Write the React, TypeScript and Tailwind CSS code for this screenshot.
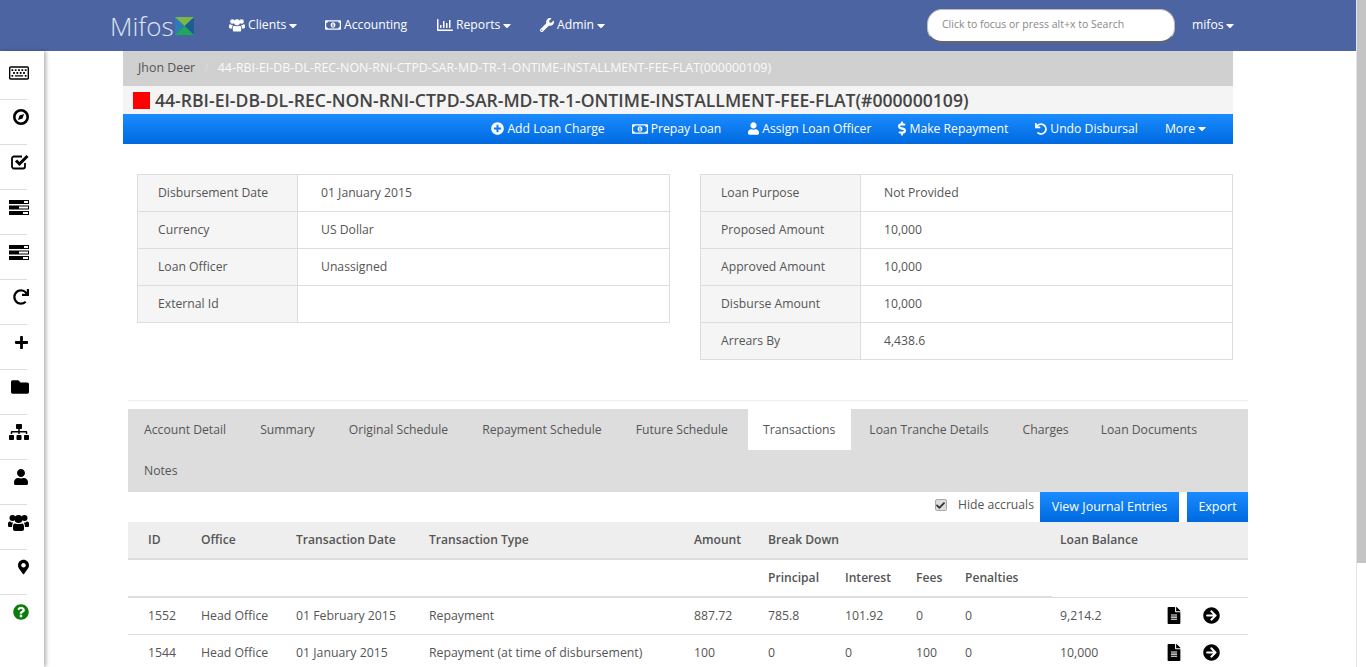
import {
  FaRegMoneyBillAlt, FaRegChartBar, FaWrench, FaCaretDown, FaPlusCircle, FaUser, FaDollarSign, FaUndo, FaCheck,
  FaRegKeyboard, FaRedo, FaPlus, FaFolder, FaSitemap, FaMapMarkerAlt, FaQuestionCircle,
  FaFileAlt, FaArrowCircleRight,
} from "react-icons/fa";

// fa-tasks from FA4, the package only has the newer shape
function TasksIcon() {
  return (
    <svg width="20" height="15" viewBox="0 0 20 15" fill="currentColor">
      <path d="M0 0h20v4H0zM15 1v2h4V1zM0 5.500h20v4H0zM10 6.500v2h9v-2zM0 11h20v4H0zM14 12v2h5v-2z" fillRule="evenodd" />
    </svg>
  );
}

function CompassIcon() {
  return (
    <svg width="16" height="16" viewBox="0 0 16 16">
      <circle cx="8" cy="8" r="6.700" fill="none" stroke="currentColor" strokeWidth="2.600" />
      <path d="M11 5L9.500 9.500L5 11L6.500 6.500z" fill="currentColor" />
    </svg>
  );
}

function CheckSquareIcon() {
  return (
    <svg width="18" height="16" viewBox="0 0 18 16" fill="none" stroke="currentColor">
      <path d="M14 9v3.500a2 2 0 0 1-2 2H3a2 2 0 0 1-2-2v-8a2 2 0 0 1 2-2h8" strokeWidth="1.800" />
      <path d="M5 6.500L8.500 10L16.500 2" strokeWidth="3" />
    </svg>
  );
}

function UsersIcon({ className }: { className?: string }) {
  return (
    <svg viewBox="0 0 21 17" fill="currentColor" className={className}>
      <circle cx="4.500" cy="4" r="3" />
      <circle cx="16.500" cy="4" r="3" />
      <circle cx="10.500" cy="5" r="4" />
      <path d="M0 9.500C0 8 1 7.500 2 7.500C3 8.500 4 8.500 5 8.500C4.500 10 4 11.500 4 13H1.500C.5 13 0 12.500 0 11.500z" />
      <path d="M21 9.500C21 8 20 7.500 19 7.500C18 8.500 17 8.500 16 8.500C16.500 10 17 11.500 17 13H19.500C20.500 13 21 12.500 21 11.500z" />
      <path d="M7 9.500C8 10.300 13 10.300 14 9.500C15.500 9.500 16 11 16 13V15C16 16.300 15.300 17 14 17H7C5.700 17 5 16.300 5 15V13C5 11 5.500 9.500 7 9.500z" />
    </svg>
  );
}

function Caret() {
  return <FaCaretDown className="w-[8px] h-[13px] shrink-0" />;
}

function Logo() {
  return (
    <div className="flex items-center">
      <span className="text-[26px] font-light text-[#dfe4ef] leading-none">Mifos</span>
      <svg width="19" height="18" viewBox="0 0 20 19" className="ml-[1px]">
        <path d="M0 0L10 9.500L0 19z" fill="#2a7db8" />
        <path d="M20 0L10 9.500L20 19z" fill="#1a5f8f" />
        <path d="M0 0H20L10 9.500z" fill="#7ab648" />
        <path d="M0 19H20L10 9.500z" fill="#1fa85a" />
      </svg>
    </div>
  );
}

const navItems = [
  { label: "Clients", icon: <UsersIcon className="w-[16px] h-[14px]" />, caret: true, w: "w-[96px]" },
  { label: "Accounting", icon: <FaRegMoneyBillAlt size={16} />, caret: false, w: "w-[112px]" },
  { label: "Reports", icon: <FaRegChartBar size={16} />, caret: true, w: "w-[103px]" },
  { label: "Admin", icon: <FaWrench size={14} />, caret: true, w: "w-[80px]" },
];

const sideIcons = [
  <FaRegKeyboard size={20} />,
  <CompassIcon />,
  <CheckSquareIcon />,
  <TasksIcon />,
  <TasksIcon />,
  <FaRedo size={16} />,
  <FaPlus size={15} />,
  <FaFolder size={18} />,
  <FaSitemap size={20} />,
  <FaUser size={16} />,
  <UsersIcon className="w-[21px] h-[17px]" />,
  <FaMapMarkerAlt className="w-[11px] h-[16px]" />,
  <FaQuestionCircle size={16} className="text-[#0a7d0a]" />,
];

const actions = [
  { label: "Add Loan Charge", icon: <FaPlusCircle size={13} /> },
  { label: "Prepay Loan", icon: <FaRegMoneyBillAlt size={16} /> },
  { label: "Assign Loan Officer", icon: <FaUser className="w-[11px] h-[13px]" /> },
  { label: "Make Repayment", icon: <FaDollarSign className="w-[8px] h-[15px]" /> },
  { label: "Undo Disbursal", icon: <FaUndo size={12} /> },
];

const leftRows = [
  ["Disbursement Date", "01 January 2015"],
  ["Currency", "US Dollar"],
  ["Loan Officer", "Unassigned"],
  ["External Id", ""],
];

const rightRows = [
  ["Loan Purpose", "Not Provided"],
  ["Proposed Amount", "10,000"],
  ["Approved Amount", "10,000"],
  ["Disburse Amount", "10,000"],
  ["Arrears By", "4,438.6"],
];

const tabs = [
  "Account Detail", "Summary", "Original Schedule", "Repayment Schedule", "Future Schedule",
  "Transactions", "Loan Tranche Details", "Charges", "Loan Documents", "Notes",
];

const transactions = [
  ["1552", "Head Office", "01 February 2015", "Repayment", "887.72", "785.8", "101.92", "0", "0", "9,214.2"],
  ["1544", "Head Office", "01 January 2015", "Repayment (at time of disbursement)", "100", "0", "0", "100", "0", "10,000"],
];

function InfoTable({ rows }: { rows: string[][] }) {
  return (
    <div className="w-[533px] border border-[#ddd] border-b-0 self-start">
      {rows.map(([k, v]) => (
        <div key={k} className="flex h-[37px] border-b border-[#ddd] items-center">
          <div className="w-[160px] h-full flex items-center pl-5 bg-[#f5f5f5] border-r border-[#ddd]">{k}</div>
          <div className="pl-[23px]">{v}</div>
        </div>
      ))}
    </div>
  );
}

export default function App() {
  return (
    <div className="h-[667px] w-[1366px] overflow-hidden flex font-['Open_Sans',sans-serif] text-[12.2px] text-[#555]">
      <div className="w-[1356px] flex flex-col">
        {/* navbar */}
        <header className="h-[51px] shrink-0 bg-[#4c65a2] flex items-center text-white pl-[110px]">
          <div className="w-[119px]"><Logo /></div>
          {navItems.map((n) => (
            <div key={n.label} className={`flex items-center gap-[3px] ${n.w}`}>
              {n.icon}
              <span>{n.label}</span>
              {n.caret && <Caret />}
            </div>
          ))}
          <div className="ml-[307px] w-[248px] h-[34px] rounded-[15px] bg-white border border-[#bbb] border-b-2 border-b-[#666] flex items-center pl-[14px] text-[10.5px] text-[#888]">
            Click to focus or press alt+x to Search
          </div>
          <div className="ml-[17px] flex items-center gap-[2px]">
            <span>mifos</span>
            <Caret />
          </div>
        </header>

        <div className="flex flex-1 min-h-0">
          {/* sidebar */}
          <aside className="w-[44px] shrink-0 bg-white shadow-[2px_0_4px_rgba(0,0,0,0.3)] pt-[4px] text-black z-10">
            {sideIcons.map((icon, i) => (
              <div key={i} className="h-[45px] border-b border-[#ddd] last:border-b-0 first:pt-[1px] w-[27px]">
                <div className="h-[34px] w-[29px] flex items-center justify-end">{icon}</div>
              </div>
            ))}
          </aside>

          <main className="flex-1 min-w-0 pl-[79px] pr-[123px]">
            {/* breadcrumb */}
            <div className="h-[35px] bg-[#d0d0d0] flex items-center pl-[15px] text-[12.4px]">
              <span className="text-[#555]">Jhon Deer</span>
              <span className="mx-[9px] text-[#ddd]">/</span>
              <span className="text-[#fafafa]">44-RBI-EI-DB-DL-REC-NON-RNI-CTPD-SAR-MD-TR-1-ONTIME-INSTALLMENT-FEE-FLAT(000000109)</span>
            </div>
            <div className="h-[28px] bg-[#f4f4f4] flex items-center pl-[10px] gap-[5px]">
              <span className="w-[17px] h-[17px] bg-[#ff0000]" />
              <span className="text-[17.6px] font-semibold text-[#444]">44-RBI-EI-DB-DL-REC-NON-RNI-CTPD-SAR-MD-TR-1-ONTIME-INSTALLMENT-FEE-FLAT(#000000109)</span>
            </div>
            <div className="h-[30px] bg-gradient-to-b from-[#1a8cff] to-[#0069e0] flex items-center justify-end text-white pr-[27px] gap-[27px]">
              {actions.map((a) => (
                <div key={a.label} className="flex items-center gap-[3px]">
                  {a.icon}
                  <span>{a.label}</span>
                </div>
              ))}
              <div className="flex items-center gap-[3px]">
                <span>More</span>
                <Caret />
              </div>
            </div>

            <div className="flex justify-between pt-[30px] pl-[14px] h-[256px]">
              <InfoTable rows={leftRows} />
              <InfoTable rows={rightRows} />
            </div>

            {/* tabs + transactions */}
            <div className="ml-[5px] w-[1120px]">
              <div className="h-[1px] bg-[#eee] mb-[8px]" />
              <div className="bg-[#ddd] flex flex-wrap h-[83px] content-start">
                {tabs.map((t) => (
                  <div
                    key={t}
                    className={`h-[41px] flex items-center pt-[1px] ${
                      t === "Transactions" ? "bg-white ml-[2px] pl-[15px] pr-[16px] mr-[2px]" : t === "Charges" ? "px-[16px]" : "px-[16px] mr-[2px]"
                    }`}
                  >
                    {t}
                  </div>
                ))}
              </div>
              <div className="h-[30px] flex justify-end items-start">
                <div className="flex items-center gap-[11px] mr-[6px] h-[26px]">
                  <span className="w-[12px] h-[12px] rounded-[2px] bg-[#ddd] border border-[#aaa] flex items-center justify-center">
                    <FaCheck size={9} className="text-[#333]" />
                  </span>
                  <span>Hide accruals</span>
                </div>
                <div className="h-[30px] w-[139px] flex items-center justify-center text-[12.5px] bg-gradient-to-b from-[#1a8cff] to-[#0069e0] text-white">View Journal Entries</div>
                <div className="h-[30px] w-[61px] ml-[8px] flex items-center justify-center text-[12.5px] bg-gradient-to-b from-[#1a8cff] to-[#0069e0] text-white">Export</div>
              </div>
              <table className="w-full table-fixed border-collapse text-left text-[12.1px]">
                <colgroup>
                  <col className="w-[65px]" /><col className="w-[95px]" /><col className="w-[133px]" /><col className="w-[265px]" />
                  <col className="w-[74px]" /><col className="w-[77px]" /><col className="w-[71px]" /><col className="w-[49px]" />
                  <col className="w-[95px]" /><col className="w-[107px]" /><col className="w-[36px]" /><col className="w-[53px]" />
                </colgroup>
                <thead>
                  <tr className="h-[37px] bg-[#eee] border-b-2 border-[#ddd]">
                    <th className="pl-5 font-semibold">ID</th>
                    <th className="pl-2 font-semibold">Office</th>
                    <th className="pl-2 font-semibold">Transaction Date</th>
                    <th className="pl-2 font-semibold">Transaction Type</th>
                    <th className="pl-2 font-semibold">Amount</th>
                    <th className="pl-2 font-semibold" colSpan={4}>Break Down</th>
                    <th className="pl-2 font-semibold" colSpan={3}>Loan Balance</th>
                  </tr>
                  <tr className="h-[38px]">
                    <th colSpan={5} className="border-b-2 border-[#ddd]" />
                    <th className="pl-2 font-semibold border-b-2 border-[#ddd]">Principal</th>
                    <th className="pl-2 font-semibold border-b-2 border-[#ddd]">Interest</th>
                    <th className="pl-2 font-semibold border-b-2 border-[#ddd]">Fees</th>
                    <th className="pl-2 font-semibold border-b-2 border-[#ddd]">Penalties</th>
                    <th colSpan={3} className="border-b border-[#ddd]" />
                  </tr>
                </thead>
                <tbody className="text-[12.3px]">
                  {transactions.map((row) => (
                    <tr key={row[0]} className="h-[37px] border-b border-[#ddd]">
                      {row.map((c, i) => (
                        <td key={i} className={i === 0 ? "pl-5 pt-[1px]" : "pl-2 pt-[1px]"}>{c}</td>
                      ))}
                      <td className="pl-2 text-black"><FaFileAlt className="w-[14px] h-[17px]" /></td>
                      <td className="pl-2 text-black"><FaArrowCircleRight size={17} /></td>
                    </tr>
                  ))}
                </tbody>
              </table>
            </div>
          </main>
        </div>
      </div>

      {/* scrollbar */}
      <div className="w-[10px] shrink-0 bg-white border-l border-[#e4e4e4]">
        <div className="h-[563px] bg-[#c4c4c4]" />
      </div>
    </div>
  );
}
